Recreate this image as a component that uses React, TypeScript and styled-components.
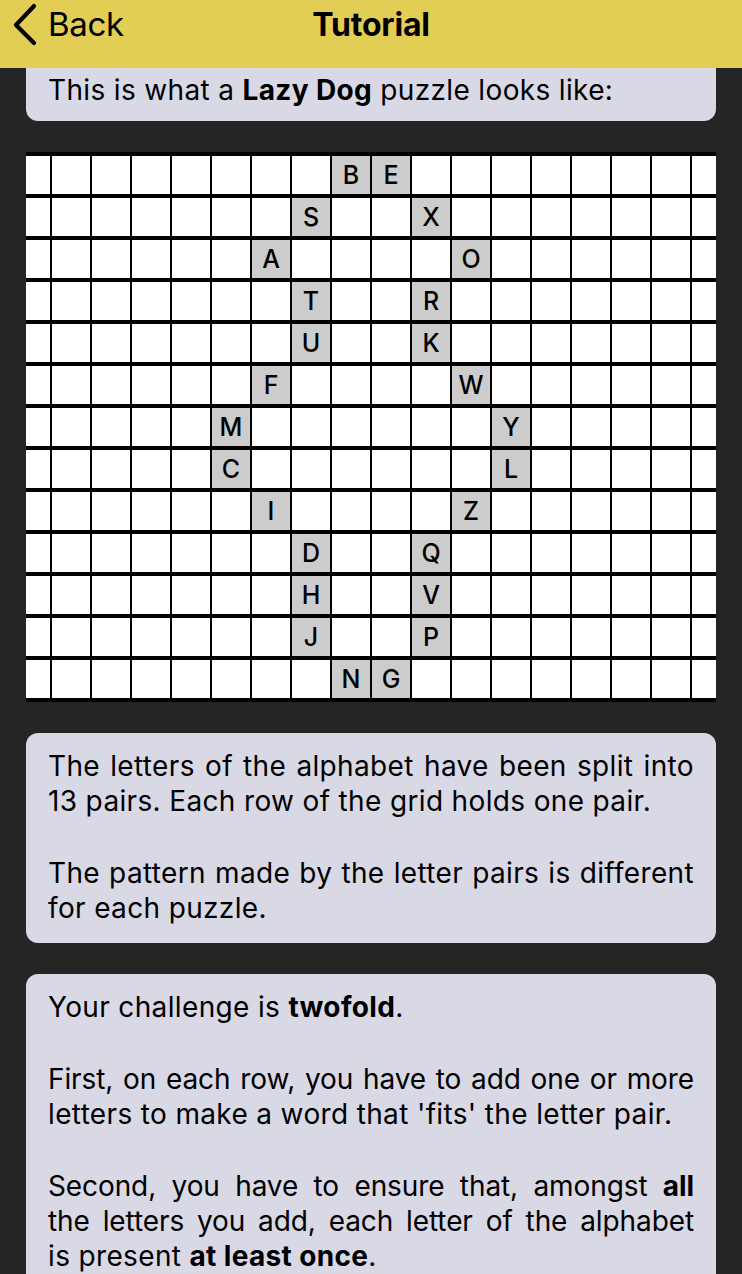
import React from "react";
import styled, { createGlobalStyle } from "styled-components";

const GlobalStyle = createGlobalStyle`
  html, body {
    margin: 0;
    padding: 0;
    background: #252525;
  }
  body {
    font-family: Inter, "Noto Sans", "Liberation Sans", sans-serif;
    color: #000;
  }
`;

const Page = styled.div`
  width: 742px;
  height: 1274px;
  display: flex;
  flex-direction: column;
  overflow: hidden;
  background: #252525;
`;

const NavBar = styled.header`
  flex: 0 0 68px;
  height: 68px;
  background: #e2cd55;
  display: grid;
  grid-template-columns: 1fr auto 1fr;
  align-items: start;
  position: relative;
  z-index: 1;
`;

const BackButton = styled.button`
  justify-self: start;
  height: 48px;
  display: flex;
  align-items: center;
  gap: 10px;
  padding: 0 0 0 12px;
  border: 0;
  background: none;
  font-family: Inter, "Noto Sans", sans-serif;
  font-size: 33px;
  font-weight: 400;
  letter-spacing: -0.3px;
  color: #000;
`;

const Title = styled.h1`
  margin: 0;
  height: 48px;
  display: flex;
  align-items: center;
  font-size: 32px;
  font-weight: 700;
  letter-spacing: -0.2px;
`;

const Scroller = styled.main`
  flex: 1;
  overflow: hidden;
`;

const Content = styled.div`
  margin-top: -12px;
  padding: 0 26px;
  display: flex;
  flex-direction: column;
  gap: 31px;
`;

const Card = styled.section<{ $tight?: boolean }>`
  background: #d9d9e6;
  border-radius: 12px;
  padding: ${(p) => (p.$tight ? "17px 22px 13px" : "16px 22px 17px")};
`;

const Para = styled.p`
  margin: 0;
  font-size: 28px;
  line-height: 35px;
  text-align: justify;
  letter-spacing: 0.35px;
  & + & {
    margin-top: 37px;
  }
  b {
    font-weight: 700;
  }
`;

const Line = styled.span<{ $last?: boolean }>`
  display: block;
  white-space: nowrap;
  letter-spacing: ${(p) => (p.$last ? "0.35px" : "-0.1px")};
  text-align: justify;
  text-align-last: ${(p) => (p.$last ? "left" : "justify")};
`;

const Grid = styled.div`
  display: grid;
  grid-template-columns: 24px repeat(16, 38px) 24px;
  grid-auto-rows: 38px;
  column-gap: 2px;
  row-gap: 4px;
  padding: 4px 0;
  background: #000;
`;

const Cell = styled.div<{ $filled: boolean }>`
  background: ${(p) => (p.$filled ? "#cccccc" : "#ffffff")};
  display: flex;
  align-items: center;
  justify-content: center;
  font-size: 25px;
  font-weight: 500;
  color: #000;
  line-height: 1;
`;

const pairs: [string, number, string, number][] = [
  ["B", 8, "E", 9],
  ["S", 7, "X", 10],
  ["A", 6, "O", 11],
  ["T", 7, "R", 10],
  ["U", 7, "K", 10],
  ["F", 6, "W", 11],
  ["M", 5, "Y", 12],
  ["C", 5, "L", 12],
  ["I", 6, "Z", 11],
  ["D", 7, "Q", 10],
  ["H", 7, "V", 10],
  ["J", 7, "P", 10],
  ["N", 8, "G", 9],
];

const Chevron = () => (
  <svg width="26" height="44" viewBox="0 0 26 44" fill="none">
    <polyline
      points="22,4 4,23 22,41"
      stroke="#000"
      strokeWidth="4.2"
      strokeLinecap="round"
      strokeLinejoin="round"
    />
  </svg>
);

export default function App() {
  return (
    <>
      <GlobalStyle />
      <Page>
        <NavBar>
          <BackButton>
            <Chevron />
            Back
          </BackButton>
          <Title>Tutorial</Title>
          <div />
        </NavBar>
        <Scroller>
          <Content>
            <Card $tight>
              <Para>
                This is what a <b>Lazy Dog</b> puzzle looks like:
              </Para>
            </Card>
            <Grid>
              {pairs.map(([a, ca, b, cb], r) =>
                Array.from({ length: 18 }, (_, c) => {
                  const letter = c === ca ? a : c === cb ? b : "";
                  return (
                    <Cell key={`${r}-${c}`} $filled={letter !== ""}>
                      {letter}
                    </Cell>
                  );
                })
              )}
            </Grid>
            <Card>
              <Para>
                The letters of the alphabet have been split into 13 pairs. Each
                row of the grid holds one pair.
              </Para>
              <Para>
                The pattern made by the letter pairs is different for each
                puzzle.
              </Para>
            </Card>
            <Card>
              <Para>
                Your challenge is <b>twofold</b>.
              </Para>
              <Para>
                <Line>First, on each row, you have to add one or more</Line>
                <Line $last>letters to make a word that 'fits' the letter pair.</Line>
              </Para>
              <Para>
                <Line>
                  Second, you have to ensure that, amongst <b>all</b>
                </Line>
                <Line>the letters you add, each letter of the alphabet</Line>
                <Line $last>
                  is present <b>at least once</b>.
                </Line>
              </Para>
            </Card>
          </Content>
        </Scroller>
      </Page>
    </>
  );
}
